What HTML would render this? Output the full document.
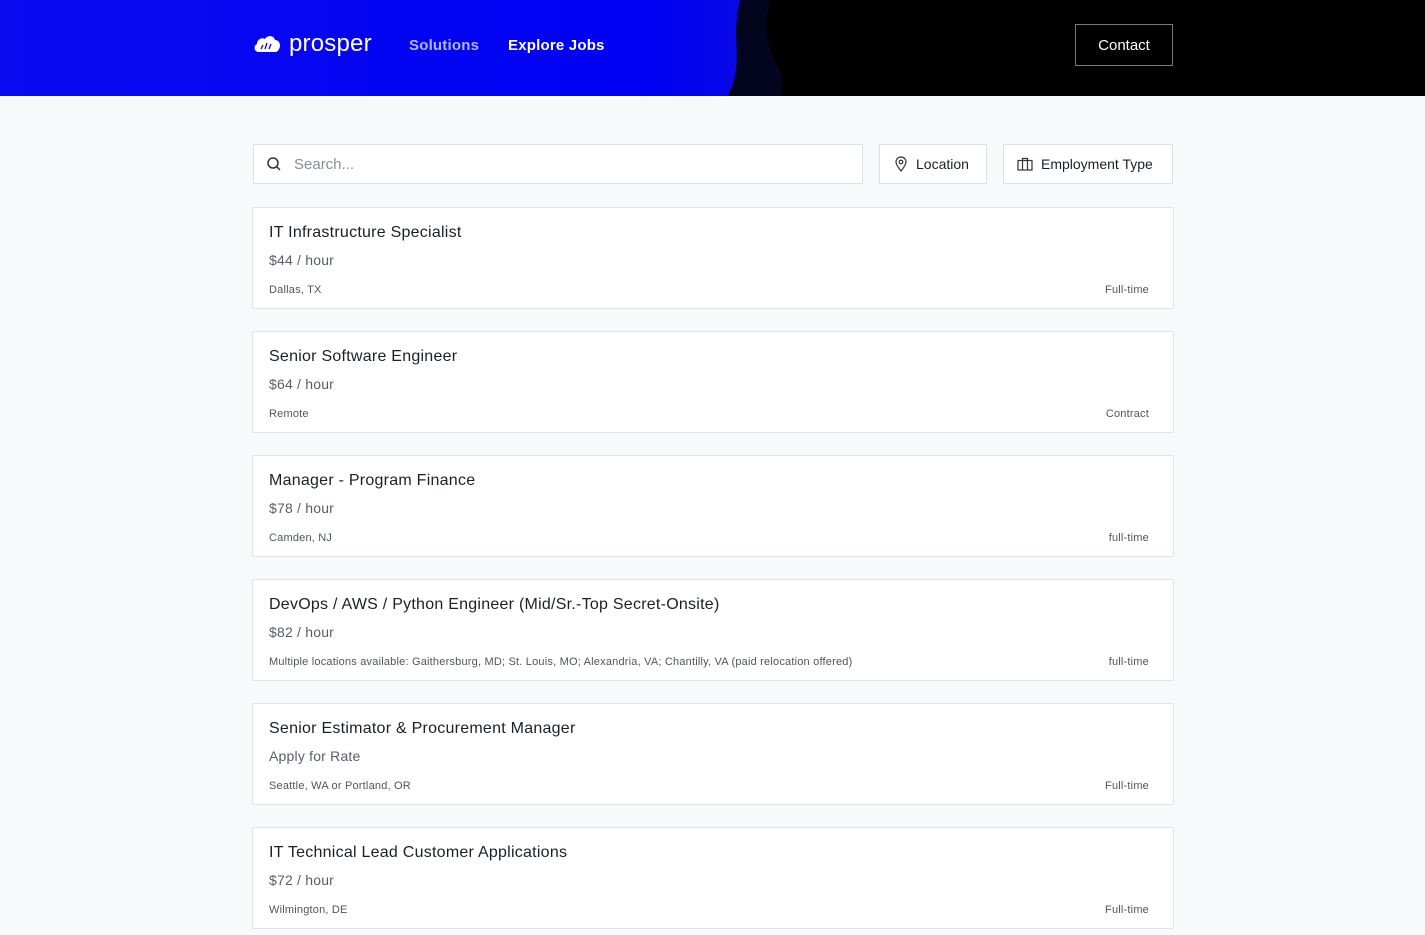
<!DOCTYPE html>
<html><head><meta charset="utf-8"><style>
*{box-sizing:border-box;margin:0;padding:0}
body{width:1425px;height:935px;overflow:hidden;background:#f8f9fb;font-family:"Liberation Sans","DejaVu Sans",sans-serif;color:#1c1f2a}
.hdr{position:relative;height:96px;background:linear-gradient(90deg,#0b0bf2 0%,#0000f5 45%,#0808e8 52%,#000 56%,#000 100%);overflow:hidden}
.logo{position:absolute;left:253px;top:30px;display:flex;align-items:center;color:#fff;font-size:24px;letter-spacing:.2px}
.nav{position:absolute;top:37px;font-size:15px;font-weight:bold;letter-spacing:.2px}
.contact{position:absolute;left:1075px;top:24px;width:98px;height:42px;border:1px solid #777;color:#fff;font-size:15px;display:flex;align-items:center;justify-content:center}
.bar{position:absolute;top:144px;height:40px;background:#fff;border:1px solid #dde0e6;display:flex;align-items:center;font-size:14px}
.card{position:absolute;left:252px;width:922px;height:102px;background:#fff;border:1px solid #e1e4ea}
.t{position:absolute;left:16px;top:16px;font-size:16px;letter-spacing:.25px;color:#1c1f2a}
.r{position:absolute;left:16px;top:44px;font-size:14px;letter-spacing:.2px;color:#585d69}
.l{position:absolute;left:16px;top:76px;font-size:11px;letter-spacing:.2px;color:#50545e}
.e{position:absolute;right:24px;top:76px;font-size:11px;letter-spacing:.2px;color:#50545e}
</style></head><body>
<div class="hdr">
<svg style="position:absolute;left:700px;top:0" width="110" height="96"><path d="M40 0 L110 0 L110 96 L28 96 C45 60 30 40 40 0Z" fill="#03051e"/><path d="M70 0 L110 0 L110 96 L80 96 C95 70 55 60 70 0Z" fill="#000"/></svg>
<div class="logo"><svg width="28" height="20" viewBox="0 0 28 20"><path d="M6 18 C1 18 0 12 4 10 C4 5 9 3 12 5 C14 1 21 1 22 6 C27 6 28 12 26 15 C25 17 24 18 22 18Z" fill="#fff"/><path d="M8 15 L10 11 M12 15 L14 9 M16 15 L18 10" stroke="#0000f0" stroke-width="1.3"/></svg><span style="margin-left:8px">prosper</span></div>
<div class="nav" style="left:409px;color:#b3b6f5">Solutions</div>
<div class="nav" style="left:508px;color:#fff">Explore Jobs</div>
<div class="contact">Contact</div>
</div>
<div class="bar" style="left:253px;width:610px;color:#8a8e98;font-size:15px"><svg style="margin:0 12px 0 12px" width="16" height="16" viewBox="0 0 16 16"><circle cx="7" cy="7" r="5" fill="none" stroke="#333" stroke-width="1.5"/><path d="M11 11 L14 14" stroke="#333" stroke-width="1.5"/></svg>Search...</div>
<div class="bar" style="left:879px;width:108px"><svg style="margin:0 8px 0 14px" width="14" height="16" viewBox="0 0 14 16"><path d="M7 15 C3 10 2 8 2 6 A5 5 0 0 1 12 6 C12 8 11 10 7 15Z" fill="none" stroke="#333" stroke-width="1.2"/><circle cx="7" cy="6" r="1.8" fill="none" stroke="#333" stroke-width="1.2"/></svg>Location</div>
<div class="bar" style="left:1003px;width:170px"><svg style="margin:0 8px 0 13px" width="16" height="14" viewBox="0 0 16 14"><rect x="1" y="3.5" width="14" height="9.5" fill="none" stroke="#333" stroke-width="1.2"/><path d="M5.5 3.5V1.5H10.5V3.5M5.5 3.5V13M10.5 3.5V13" fill="none" stroke="#333" stroke-width="1.2"/></svg>Employment Type</div>

<div class="card" style="top:207px"><div class="t">IT Infrastructure Specialist</div><div class="r">$44 / hour</div><div class="l">Dallas, TX</div><div class="e">Full-time</div></div>
<div class="card" style="top:331px"><div class="t">Senior Software Engineer</div><div class="r">$64 / hour</div><div class="l">Remote</div><div class="e">Contract</div></div>
<div class="card" style="top:455px"><div class="t">Manager - Program Finance</div><div class="r">$78 / hour</div><div class="l">Camden, NJ</div><div class="e">full-time</div></div>
<div class="card" style="top:579px"><div class="t">DevOps / AWS / Python Engineer (Mid/Sr.-Top Secret-Onsite)</div><div class="r">$82 / hour</div><div class="l">Multiple locations available: Gaithersburg, MD; St. Louis, MO; Alexandria, VA; Chantilly, VA (paid relocation offered)</div><div class="e">full-time</div></div>
<div class="card" style="top:703px"><div class="t">Senior Estimator &amp; Procurement Manager</div><div class="r">Apply for Rate</div><div class="l">Seattle, WA or Portland, OR</div><div class="e">Full-time</div></div>
<div class="card" style="top:827px"><div class="t">IT Technical Lead Customer Applications</div><div class="r">$72 / hour</div><div class="l">Wilmington, DE</div><div class="e">Full-time</div></div>
</body></html>
